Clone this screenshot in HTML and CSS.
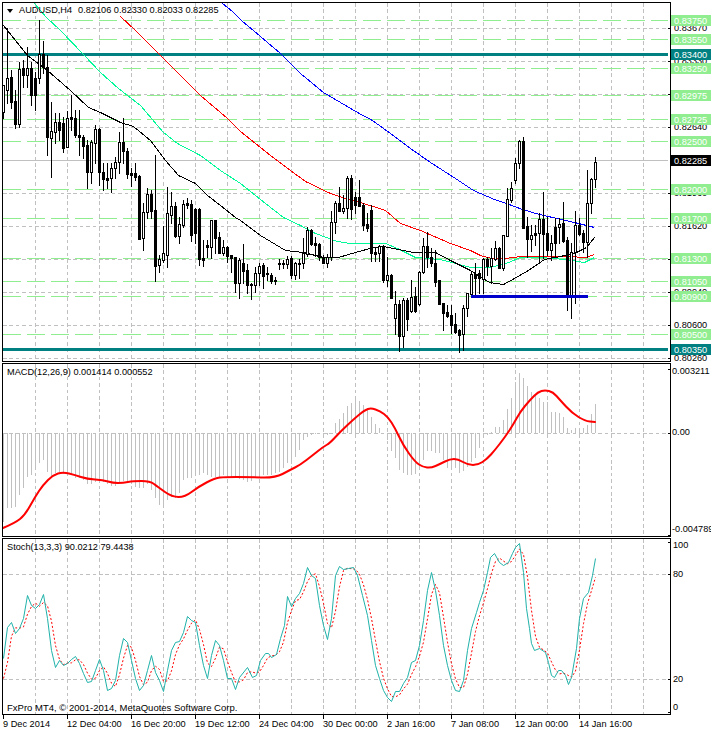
FILE: index.html
```html
<!DOCTYPE html>
<html lang="en">

<head>
	<meta charset="UTF-8">
	<meta name="viewport" content="width=device-width, initial-scale=1.0">
	<title>AUDUSD,H4</title>
	<link rel="stylesheet" href="styles.css">
</head>

<body>
	<div class="chart">
		<section class="pane pane-price">
			<svg id="priceChart" class="pane-svg" width="711" height="360" viewBox="0 2 711 360"></svg>
			<div class="legend">
				<span class="legend-arrow"></span>
				<span>AUDUSD,H4</span>
				<span class="legend-values">0.82106 0.82330 0.82033 0.82285</span>
			</div>
		</section>

		<section class="pane pane-macd">
			<svg id="macdChart" class="pane-svg" width="711" height="174" viewBox="0 363 711 174"></svg>
			<div class="legend">MACD(12,26,9) 0.001414 0.000552</div>
		</section>

		<section class="pane pane-stoch">
			<svg id="stochChart" class="pane-svg" width="711" height="177" viewBox="0 538 711 177"></svg>
			<div class="legend">Stoch(13,3,3) 90.0212 79.4438</div>
			<div class="copyright">FxPro MT4, © 2001-2014, MetaQuotes Software Corp.</div>
		</section>

		<ul class="time-axis">
			<li class="time-tick">9 Dec 2014</li>
			<li class="time-tick">12 Dec 04:00</li>
			<li class="time-tick">16 Dec 20:00</li>
			<li class="time-tick">19 Dec 12:00</li>
			<li class="time-tick">24 Dec 04:00</li>
			<li class="time-tick">30 Dec 00:00</li>
			<li class="time-tick">2 Jan 16:00</li>
			<li class="time-tick">7 Jan 08:00</li>
			<li class="time-tick">12 Jan 00:00</li>
			<li class="time-tick">14 Jan 16:00</li>
		</ul>
	</div>

	<script src="chart.js"></script>
</body>

</html>
```

FILE: styles.css
```css
* {
	margin: 0;
	padding: 0;
	box-sizing: border-box;
}

body {
	background: white;
	color: black;
	font-family: 'Liberation Sans', Arial, sans-serif;
	font-size: 9.2px;
	overflow: hidden;
}

.chart {
	width: 711px;
	height: 732px;
	padding-top: 2px;
	display: flex;
	flex-direction: column;
	gap: 1px;
}

.pane {
	position: relative;
}

.pane::after {
	content: "";
	position: absolute;
	top: 0;
	bottom: 0;
	left: 2px;
	width: 667px;
	border: 1px solid black;
}

.pane-price {
	height: 360px;
}

.pane-macd {
	height: 174px;
}

.pane-stoch {
	height: 177px;
}

.pane-svg {
	display: block;
}

/* legends sit on top of the plot */
.legend {
	position: absolute;
	top: 4px;
	left: 7px;
	line-height: 11px;
	white-space: nowrap;
	z-index: 1;
}

.pane-price .legend {
	display: flex;
	align-items: center;
	gap: 6px;
	top: 3px;
}

.legend-arrow {
	width: 0;
	height: 0;
	border-left: 3.5px solid transparent;
	border-right: 3.5px solid transparent;
	border-top: 4px solid black;
}

.copyright {
	position: absolute;
	left: 7px;
	bottom: 2px;
	font-size: 9.5px;
	line-height: 11px;
	white-space: nowrap;
	z-index: 1;
}

/* time axis */
.time-axis {
	display: flex;
	list-style: none;
	padding-left: 3px;
	margin-top: -1px;
}

.time-tick {
	width: 64px;
	white-space: nowrap;
	line-height: 11px;
}

.time-tick::before {
	content: "";
	display: block;
	width: 1px;
	height: 4px;
	background: black;
}

.time-tick:first-child {
	text-indent: -1px;
}

/* svg parts */
.grid {
	stroke: #c0c0c0;
	stroke-width: 1;
	stroke-dasharray: 3.5 2.9;
	shape-rendering: crispEdges;
	fill: none;
}

.price-line {
	stroke: #c0c0c0;
	shape-rendering: crispEdges;
}

.level {
	stroke: #90ee90;
	stroke-dasharray: 17.7 6.3;
	shape-rendering: crispEdges;
}

.level-major {
	stroke: #008080;
	stroke-width: 3;
	shape-rendering: crispEdges;
}

.support {
	stroke: #0000cd;
	stroke-width: 3;
	shape-rendering: crispEdges;
}

.ma {
	fill: none;
	stroke-width: 1;
	shape-rendering: crispEdges;
}

.ma-blue {
	stroke: #0000ff;
}

.ma-red {
	stroke: #ff0000;
}

.ma-green {
	stroke: #00fa9a;
}

.ma-black {
	stroke: black;
}

.wick {
	stroke: black;
	shape-rendering: crispEdges;
}

.body-down {
	fill: black;
	shape-rendering: crispEdges;
}

.body-up {
	fill: white;
	stroke: black;
	shape-rendering: crispEdges;
}

.hist {
	stroke: #c0c0c0;
	shape-rendering: crispEdges;
}

.macd-signal {
	fill: none;
	stroke: #ff0000;
	stroke-width: 2;
	stroke-linejoin: round;
	stroke-linecap: round;
}

.stoch-main {
	fill: none;
	stroke: #20b2aa;
	stroke-width: 1;
}

.stoch-signal {
	fill: none;
	stroke: #ff0000;
	stroke-width: 1;
	stroke-dasharray: 2 2;
}

.tick {
	stroke: black;
	shape-rendering: crispEdges;
}

.axis-text {
	font-family: 'Liberation Sans', Arial, sans-serif;
	font-size: 9.2px;
	fill: black;
}

.tag-text {
	font-family: 'Liberation Sans', Arial, sans-serif;
	font-size: 9.2px;
	fill: white;
}

.tag-green {
	fill: #90ee90;
}

.tag-teal {
	fill: #008080;
}

.tag-black {
	fill: black;
}
```

FILE: chart.js
```js
const BAR_X0 = 3;
const BAR_STEP = 4;
const PLOT_RIGHT = 668;
const GRID_XS = [];
for (let x = 35; x <= 643; x += 32) GRID_XS.push(x);

const barX = (k) => BAR_X0 + BAR_STEP * k;

// high, body top, body bottom, low, hollow - all in chart pixels
const candles = [
	[85, 85, 112, 118, 1], [28, 78, 90, 103, 1], [70, 77, 102, 108, 0], [90, 101, 124, 128, 0],
	[62, 69, 124, 127, 1], [60, 68, 75, 87, 0], [47, 68, 75, 87, 1], [62, 68, 95, 105, 0],
	[72, 78, 95, 110, 0], [20, 54, 78, 83, 1], [41, 54, 67, 73, 0], [55, 67, 137, 155, 0],
	[102, 131, 138, 177, 1], [113, 122, 132, 143, 1], [113, 122, 130, 140, 0], [117, 123, 148, 152, 0],
	[111, 118, 147, 147, 1], [95, 117, 119, 130, 0], [110, 118, 135, 137, 0], [110, 135, 137, 155, 0],
	[135, 137, 146, 158, 0], [140, 145, 172, 188, 0], [140, 142, 172, 183, 1], [125, 129, 143, 163, 1],
	[128, 129, 172, 185, 0], [163, 172, 179, 190, 0], [163, 178, 180, 188, 0], [163, 168, 178, 192, 1],
	[157, 162, 168, 178, 1], [132, 142, 162, 173, 1], [118, 142, 151, 163, 0], [148, 151, 174, 178, 0],
	[168, 173, 175, 186, 0], [163, 173, 177, 180, 0], [175, 176, 239, 239, 0], [203, 212, 238, 250, 1],
	[188, 194, 212, 218, 1], [190, 194, 211, 218, 0], [155, 210, 266, 281, 0], [255, 259, 265, 272, 1],
	[226, 253, 260, 262, 1], [187, 213, 255, 267, 1], [192, 206, 215, 223, 1], [202, 206, 236, 237, 0],
	[217, 224, 236, 243, 1], [200, 204, 225, 227, 1], [198, 203, 205, 208, 0], [200, 204, 235, 241, 0],
	[208, 209, 233, 243, 0], [208, 209, 259, 265, 0], [240, 258, 260, 266, 0], [240, 245, 247, 257, 0],
	[220, 220, 247, 258, 1], [220, 220, 238, 253, 0], [232, 237, 253, 253, 0], [240, 247, 253, 255, 1],
	[246, 247, 256, 262, 0], [255, 255, 258, 272, 0], [257, 257, 283, 292, 0], [258, 260, 283, 298, 1],
	[244, 263, 271, 283, 0], [264, 270, 285, 293, 0], [283, 284, 285, 299, 0], [267, 273, 285, 292, 1],
	[263, 266, 273, 285, 1], [263, 265, 276, 288, 0], [267, 273, 274, 280, 0], [273, 275, 281, 283, 0],
	[277, 280, 281, 284, 0], [259, 263, 264, 269, 0], [260, 263, 264, 268, 0], [256, 259, 264, 268, 1],
	[256, 258, 275, 278, 0], [262, 263, 275, 279, 1], [259, 263, 264, 278, 0], [238, 253, 263, 268, 1],
	[227, 230, 254, 256, 1], [229, 230, 244, 245, 0], [237, 243, 245, 256, 0], [243, 244, 257, 260, 0],
	[255, 257, 263, 263, 0], [254, 257, 263, 267, 1], [211, 222, 257, 260, 1], [201, 203, 222, 233, 1],
	[187, 203, 211, 211, 0], [195, 208, 211, 213, 1], [176, 178, 208, 218, 1], [175, 178, 209, 219, 0],
	[192, 197, 205, 213, 0], [180, 197, 206, 206, 0], [203, 205, 225, 230, 0], [213, 224, 228, 231, 0],
	[205, 210, 253, 261, 0], [247, 252, 254, 261, 0], [245, 246, 253, 261, 1], [245, 246, 280, 282, 0],
	[257, 275, 280, 286, 1], [274, 275, 298, 298, 0], [291, 304, 318, 334, 1], [300, 304, 336, 351, 0],
	[298, 300, 336, 347, 1], [298, 300, 319, 330, 0], [280, 297, 311, 312, 1], [287, 296, 311, 312, 0],
	[271, 272, 304, 305, 1], [238, 246, 272, 273, 1], [232, 246, 257, 267, 0], [248, 257, 263, 266, 0],
	[250, 263, 282, 286, 0], [280, 280, 304, 304, 0], [303, 303, 313, 330, 0], [305, 312, 316, 317, 0],
	[305, 315, 325, 333, 0], [313, 324, 332, 333, 0], [329, 330, 335, 352, 0], [305, 308, 334, 350, 1],
	[293, 293, 308, 316, 1], [272, 274, 294, 295, 1], [263, 274, 278, 295, 0], [270, 273, 278, 293, 0],
	[258, 259, 279, 293, 1], [257, 259, 266, 275, 0], [248, 258, 266, 283, 1], [241, 248, 259, 260, 1],
	[247, 248, 268, 268, 0], [235, 235, 268, 270, 1], [188, 199, 236, 236, 1], [182, 188, 200, 202, 1],
	[158, 163, 180, 183, 1], [140, 141, 163, 168, 1], [137, 141, 228, 228, 0], [217, 226, 239, 257, 0],
	[225, 235, 239, 251, 1], [225, 233, 235, 245, 0], [213, 219, 233, 262, 1], [192, 219, 234, 258, 0],
	[217, 233, 250, 255, 0], [235, 243, 250, 260, 1], [218, 227, 243, 256, 0], [218, 224, 227, 243, 1],
	[202, 223, 241, 242, 0], [237, 240, 295, 310, 0], [243, 252, 296, 318, 1], [211, 225, 252, 303, 1],
	[218, 225, 234, 235, 0], [230, 233, 242, 252, 0], [170, 203, 242, 257, 1], [178, 179, 203, 213, 1],
	[157, 162, 179, 187, 1]
];

const maBlue = [[222, 3], [232, 11], [241, 20], [260, 36], [280, 53], [300, 73], [323, 92], [340, 102], [357, 112], [372, 120], [390, 133], [410, 148], [430, 162], [455, 178], [473, 190], [494, 199], [506, 203], [522, 209], [539, 214], [574, 222], [594, 227]];
const maRed = [[120, 16], [135, 30], [158, 53], [175, 70], [200, 95], [227, 118], [240, 131], [255, 143], [270, 155], [290, 170], [305, 181], [330, 193], [345, 198], [360, 202], [385, 210], [400, 223], [420, 230], [450, 243], [470, 250], [480, 255], [491, 258], [505, 258], [521, 256], [567, 256], [585, 257], [594, 254]];
const maGreen = [[34, 3], [46, 17], [60, 30], [83, 54], [100, 72], [118, 88], [140, 105], [163, 132], [177, 143], [200, 155], [220, 170], [240, 183], [265, 203], [283, 217], [300, 225], [315, 233], [337, 241], [350, 243], [385, 243], [397, 248], [415, 257], [440, 259], [470, 267], [490, 267], [508, 262], [520, 257], [540, 257], [565, 259], [584, 262], [594, 257]];
const maBlack = [[3, 25], [15, 40], [27, 55], [47, 70], [70, 90], [88, 107], [100, 112], [120, 122], [133, 126], [150, 140], [165, 160], [178, 175], [195, 183], [207, 195], [220, 205], [235, 217], [240, 220], [260, 235], [285, 250], [303, 252], [323, 257], [338, 257], [355, 252], [373, 247], [383, 246], [413, 252], [435, 252], [450, 260], [470, 270], [489, 282], [503, 284], [514, 278], [528, 270], [544, 259], [560, 256], [576, 252], [586, 247], [594, 237]];

const greenLevels = [20, 39, 68, 95, 119, 141, 189, 218, 258, 281, 296, 334];
const majorLevels = [54, 349];
const priceGrid = [28, 61, 94, 127, 193, 226, 259, 292, 325, 358];
// the scale values at 94 and 259 sit fully under a tag, so they are left out
const priceScale = [[28, '0.83670'], [61, '0.83330'], [127, '0.82640'], [193, '0.81960'], [226, '0.81620'], [292, '0.80940'], [325, '0.80600'], [358, '0.80260']];
const priceTags = [
	[20, '0.83750', 'green'], [39, '0.83550', 'green'], [54, '0.83400', 'teal'], [68, '0.83250', 'green'],
	[95, '0.82975', 'green'], [119, '0.82725', 'green'], [141, '0.82500', 'green'], [160, '0.82285', 'black'],
	[189, '0.82000', 'green'], [218, '0.81700', 'green'], [258, '0.81300', 'green'], [281, '0.81050', 'green'],
	[296, '0.80900', 'green'], [334, '0.80500', 'green'], [349, '0.80350', 'teal']
];

const macdHist = [
	522, 508, 508, 507, 495, 488, 477, 475, 467, 463, 460,
	472, 476, 473, 472, 474, 474, 475, 478, 478, 480,
	484, 484, 482, 480, 482, 484, 486, 486, 483, 481,
	483, 484, 487, 488, 488, 484, 490, 498, 505, 506,
	500, 497, 498, 493, 480, 478, 478, 473, 475, 473,
	475, 477, 477, 477, 475, 477, 477, 477, 479, 480,
	482, 481, 477, 477, 475, 475, 475, 473, 472, 468,
	463, 462, 457, 450, 440, 437, 435, 434, 434, 434,
	435, 434, 423, 419, 413, 406, 403, 398,
	401, 405, 410, 417, 424, 428,
	434, 440, 451, 458, 470, 473, 475, 475, 474, 470, 460, 451, 451, 453, 453, 460, 468, 467, 468, 473, 471, 467, 462, 458, 448, 438, 435,
	432, 427, 427, 420, 409, 398, 382, 373, 378, 386, 392, 395, 398, 402, 405, 412, 412, 413, 417, 428, 430, 428, 428, 428, 425, 414, 404
];
const macdLine = [[3, 528], [15, 523], [25, 515], [35, 497], [43, 485], [53, 475], [63, 472], [75, 475], [87, 479], [103, 480], [113, 483], [123, 483], [133, 481], [150, 481], [158, 487], [172, 497], [185, 497], [198, 487], [215, 478], [225, 477], [247, 477], [275, 478], [290, 470], [300, 465], [313, 455], [323, 447], [330, 443], [340, 432], [355, 418], [365, 410], [371, 408], [380, 411], [388, 417], [395, 428], [403, 445], [415, 462], [423, 467], [431, 468], [440, 464], [450, 459], [458, 459], [468, 465], [478, 465], [487, 459], [495, 450], [505, 437], [513, 425], [520, 412], [530, 400], [538, 392], [545, 390], [553, 392], [560, 400], [572, 413], [585, 421], [595, 422]];

const stochMain = [
	[3, 658], [7, 627], [11, 622], [15, 633], [19, 628], [23, 618], [27, 595], [31, 605], [35, 608], [39, 604], [43, 594],
	[47, 618], [51, 650], [55, 667], [59, 660], [63, 665], [67, 663], [71, 659], [75, 656], [79, 663], [83, 673], [87, 682],
	[91, 681], [95, 670], [99, 659], [103, 670], [107, 690], [111, 688], [115, 680], [119, 655], [123, 638], [127, 642],
	[131, 660], [135, 678], [139, 690], [143, 685], [147, 670], [151, 655], [155, 672], [159, 680], [163, 691], [167, 670],
	[171, 650], [175, 642], [179, 641], [183, 632], [187, 616], [191, 620], [195, 622], [199, 645], [203, 665], [207, 678],
	[211, 655], [215, 640], [219, 645], [223, 660], [227, 678], [231, 678], [235, 689], [239, 677], [247, 667], [252, 677],
	[256, 675], [260, 660], [265, 653], [268, 653], [271, 657], [276, 654], [280, 638], [284, 625], [287, 596], [291, 606],
	[295, 598], [299, 593], [303, 583], [307, 567], [311, 575], [315, 578], [319, 605], [323, 625], [327, 639], [331, 618],
	[335, 575], [339, 566], [343, 569], [348, 568], [353, 567], [357, 575], [362, 595], [367, 615], [371, 640], [375, 665],
	[379, 678], [383, 690], [387, 697], [391, 701], [395, 691], [399, 691], [403, 683], [407, 677], [411, 662], [415, 660],
	[419, 645], [423, 620], [427, 590], [431, 572], [435, 590], [439, 615], [443, 645], [447, 665], [451, 680], [455, 690],
	[459, 691], [463, 680], [467, 650], [471, 628], [476, 612], [479, 602], [483, 590], [487, 572], [490, 557], [494, 553],
	[499, 562], [503, 565], [508, 562], [512, 553], [515, 547], [519, 543], [523, 572], [526, 608], [529, 628], [531, 643],
	[534, 650], [539, 648], [545, 652], [548, 662], [551, 675], [554, 677], [558, 670], [561, 670], [565, 675], [568, 684],
	[571, 677], [576, 648], [579, 618], [583, 598], [588, 592], [592, 575], [595, 558]
];

function points(list) {
	return list.map(([x, y]) => `${x + 0.5},${y + 0.5}`).join(' ');
}

// rounds the corners of a polyline by curving through segment midpoints
function smoothPath(list) {
	let d = `M${list[0][0]} ${list[0][1]}`;
	for (let i = 1; i < list.length - 1; i++) {
		const [x, y] = list[i];
		const midX = (x + list[i + 1][0]) / 2;
		const midY = (y + list[i + 1][1]) / 2;
		d += ` Q${x} ${y} ${midX} ${midY}`;
	}
	const last = list[list.length - 1];
	return `${d} L${last[0]} ${last[1]}`;
}

function line(x1, y1, x2, y2, cls) {
	return `<line class="${cls}" x1="${x1}" y1="${y1}" x2="${x2}" y2="${y2}"/>`;
}

function gridColumns(top, bottom) {
	return GRID_XS.map((x) => line(x + 0.5, top, x + 0.5, bottom, 'grid')).join('');
}

function gridRow(y) {
	return line(3, y + 0.5, PLOT_RIGHT, y + 0.5, 'grid');
}

function tick(y) {
	return line(PLOT_RIGHT, y + 0.5, PLOT_RIGHT + 3, y + 0.5, 'tick');
}

function axisText(x, y, text) {
	return `<text class="axis-text" x="${x}" y="${y + 3}">${text}</text>`;
}

function drawCandles() {
	return candles.map(([high, top, bottom, low, hollow], k) => {
		const x = barX(k);
		let html = line(x + 0.5, high, x + 0.5, low + 1, 'wick');
		if (hollow) {
			html += `<rect class="body-up" x="${x - 0.5}" y="${top + 0.5}" width="2" height="${bottom - top}"/>`;
		} else {
			html += `<rect class="body-down" x="${x - 1}" y="${top}" width="3" height="${bottom - top + 1}"/>`;
		}
		return html;
	}).join('');
}

function drawPrice() {
	let html = gridColumns(3, 361);
	html += priceGrid.map(gridRow).join('');
	html += line(3, 160.5, PLOT_RIGHT, 160.5, 'price-line');
	html += greenLevels.map((y) => line(3, y + 0.5, PLOT_RIGHT, y + 0.5, 'level')).join('');
	html += majorLevels.map((y) => line(3, y + 0.5, PLOT_RIGHT, y + 0.5, 'level-major')).join('');

	// moving averages go under the candles
	html += `<polyline class="ma ma-blue" points="${points(maBlue)}"/>`;
	html += `<polyline class="ma ma-red" points="${points(maRed)}"/>`;
	html += `<polyline class="ma ma-green" points="${points(maGreen)}"/>`;
	html += `<polyline class="ma ma-black" points="${points(maBlack)}"/>`;
	html += drawCandles();
	html += line(471, 296.5, 588, 296.5, 'support');

	// scale first, coloured tags cover it
	html += priceGrid.map(tick).join('');
	html += priceScale.map(([y, text]) => axisText(674, y, text)).join('');
	html += priceTags.map(([y, text, color]) => {
		return `<rect class="tag-${color}" x="670" y="${y - 5}" width="41" height="11"/>` +
			`<text class="tag-text" x="674" y="${y + 3.5}">${text}</text>`;
	}).join('');
	document.getElementById('priceChart').innerHTML = html;
}

function drawMacd() {
	let html = gridColumns(364, 536);
	html += gridRow(433);
	html += macdHist.map((y, k) => line(barX(k) + 0.5, 433, barX(k) + 0.5, y, 'hist')).join('');
	html += `<path class="macd-signal" d="${smoothPath(macdLine)}"/>`;
	html += [369, 433, 535].map(tick).join('');
	html += axisText(672, 371, '0.003211') + axisText(672, 432, '0.00') + axisText(672, 529, '-0.004789');
	document.getElementById('macdChart').innerHTML = html;
}

// sample the main line at each bar, the signal is its 3 bar average
function stochSignal() {
	const values = candles.map((c, k) => {
		const x = barX(k);
		const next = stochMain.findIndex((p) => p[0] >= x);
		const [x1, y1] = stochMain[Math.max(next - 1, 0)];
		const [x2, y2] = stochMain[next];
		return x2 === x1 ? y2 : y1 + (y2 - y1) * (x - x1) / (x2 - x1);
	});
	return values.map((v, k) => {
		if (k === 0) return [barX(k), 678];
		if (k === 1) return [barX(k), 662];
		return [barX(k), (v + values[k - 1] + values[k - 2]) / 3];
	});
}

function drawStoch() {
	let html = gridColumns(539, 714);
	html += gridRow(574) + gridRow(679);
	html += `<polyline class="stoch-signal" points="${points(stochSignal())}"/>`;
	html += `<polyline class="stoch-main" points="${points(stochMain)}"/>`;
	html += [542, 574, 679, 712].map(tick).join('');
	html += axisText(673, 545, '100') + axisText(673, 574, '80') + axisText(673, 679, '20') + axisText(673, 707, '0');
	document.getElementById('stochChart').innerHTML = html;
}

drawPrice();
drawMacd();
drawStoch();
```
